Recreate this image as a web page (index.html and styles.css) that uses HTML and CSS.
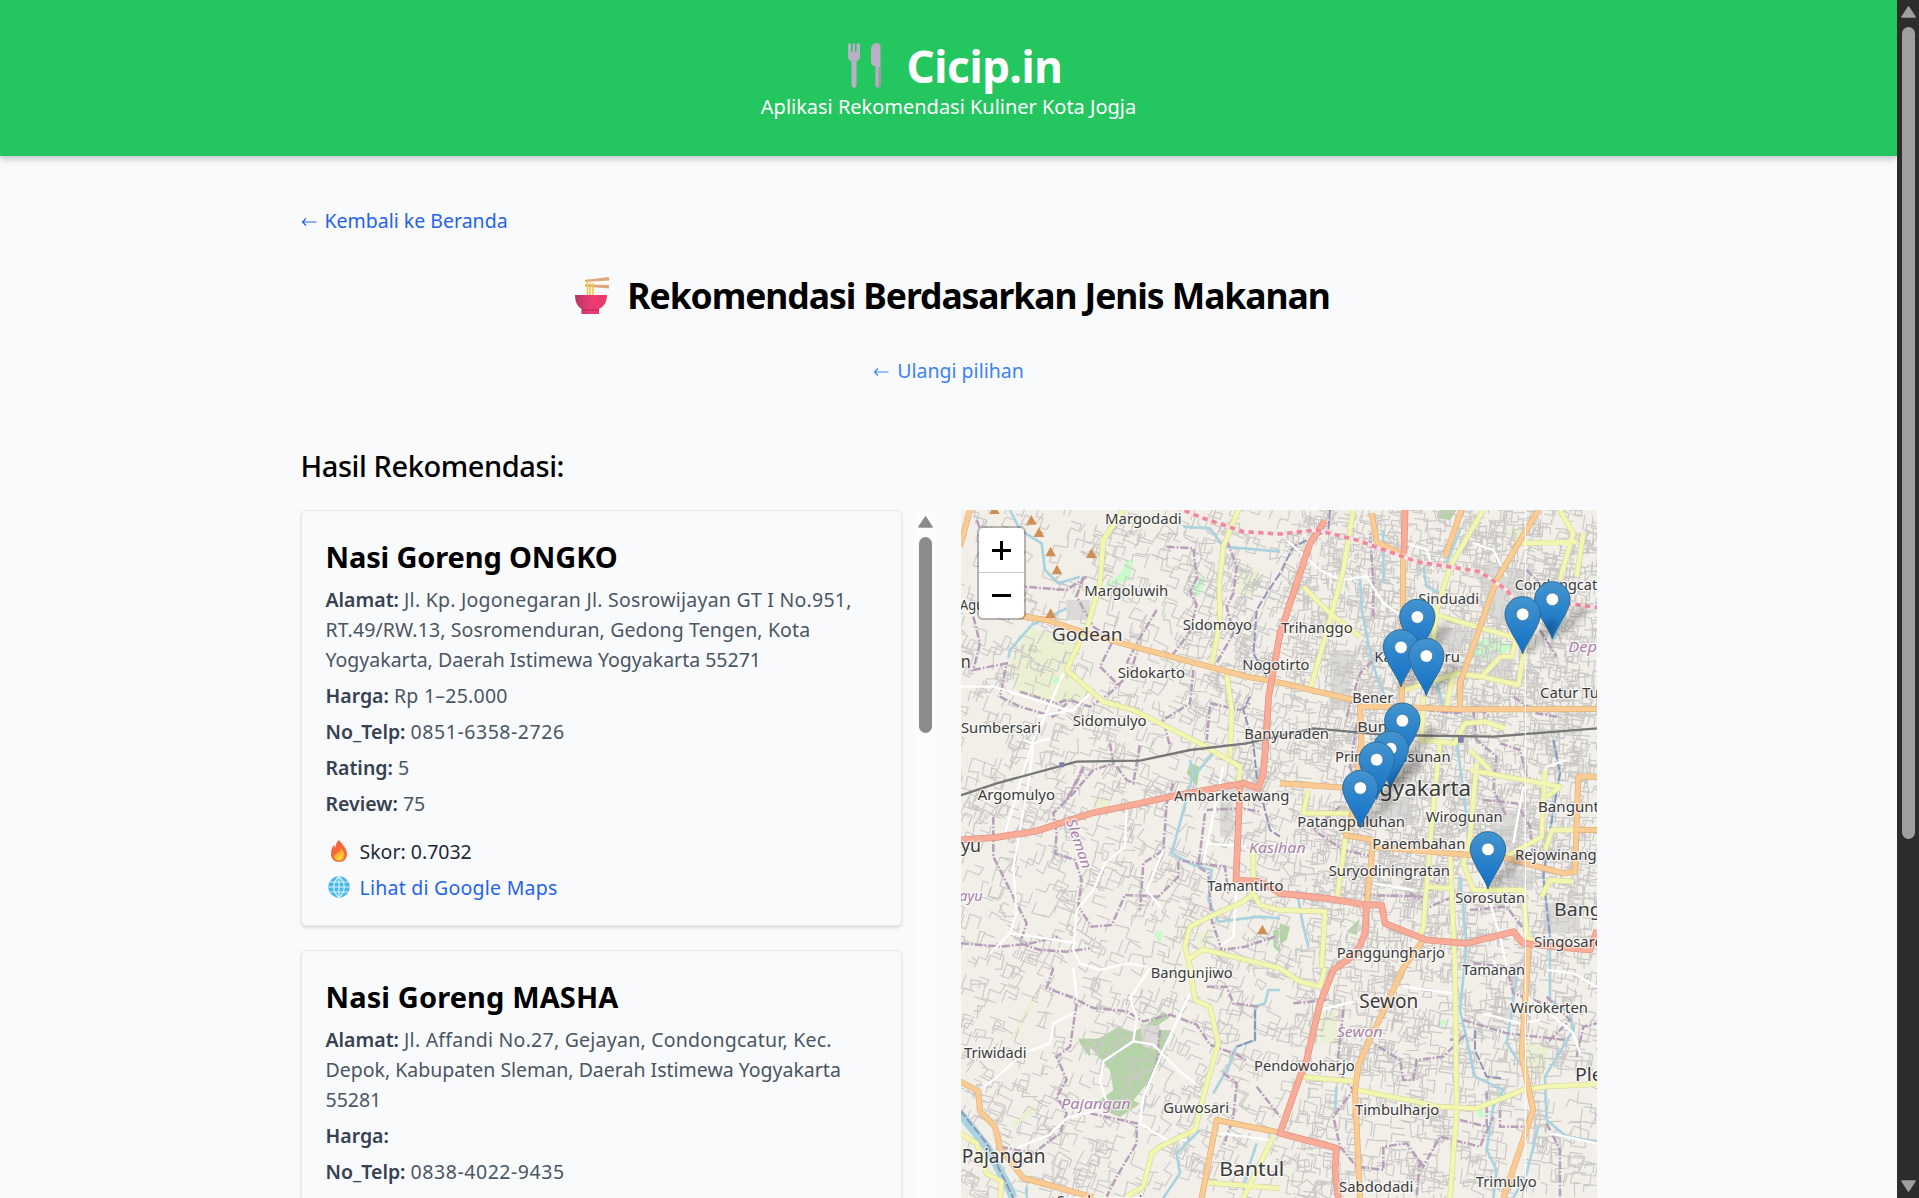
FILE: index.html
```html
<!DOCTYPE html>
<html lang="id">
<head>
<meta charset="utf-8">
<title>Cicip.in</title>
<link rel="stylesheet" href="styles.css">
</head>
<body>
<div class="page">
  <header class="header">
    <h1 class="brand">
      <svg class="brand-icon" viewBox="0 0 36 46"><path fill="#b9afc6" d="M1 1q2-1.500 3 0v8h1.500V1q1.500-1.500 2.500 0v8h1.500V1q2-1.500 3.500 0v12q0 4-3.500 5.500V43q-2.500 4-5 0V18.500Q1 17 1 13z"/><path fill="#b9afc6" d="M24 7q0-7 6-7 3.500 0 3.500 4v39q-2.500 3.500-5 0V23.500q-4.500-1-4.500-5z"/><path fill="#a797ae" d="M31.500 24h2v19q-1 2-2.500 2z"/></svg>
      <span>Cicip.in</span>
    </h1>
    <p class="tagline">Aplikasi Rekomendasi Kuliner Kota Jogja</p>
  </header>
  <main class="content">
    <a class="back"><svg class="arrow" viewBox="0 0 16 12"><path d="M15.500 6H1.500M5 2.500 1.500 6 5 9.500"/></svg><span>Kembali ke Beranda</span></a>
    <h2 class="heading">
      <svg class="bowl" viewBox="0 0 34 37"><path d="m10 3 24-3v3.500L10 5zM10 7.500l24 .5v3.500L10 9.500z" fill="#dda67c"/><path d="M12.500 2v17M15 6v13M18 6v12" stroke="#f3c33c" stroke-width="1.500"/><path d="M0 18h32q0 10-8 14v5H6.500v-5Q0 28 0 18z" fill="url(#bowl)"/><path d="M7 33h17" stroke="#b92a50"/><defs><linearGradient id="bowl"><stop stop-color="#b4365f"/><stop offset=".5" stop-color="#ec3c77"/><stop offset="1" stop-color="#e83864"/></linearGradient></defs></svg>
      <span>Rekomendasi Berdasarkan Jenis Makanan</span>
    </h2>
    <a class="retry"><svg class="arrow" viewBox="0 0 16 12"><path d="M15.500 6H1.500M5 2.500 1.500 6 5 9.500"/></svg><span>Ulangi pilihan</span></a>
    <h3 class="subheading">Hasil Rekomendasi:</h3>
    <div class="results">
      <div class="list">
        <article class="card">
          <h4 class="tight">Nasi Goreng ONGKO</h4>
          <p><b>Alamat:</b> <span class="loose">Jl. Kp. Jogonegaran Jl. Sosrowijayan GT I No.951,</span><br><span class="open">RT.49/RW.13, Sosromenduran, Gedong Tengen, Kota</span><br>Yogyakarta, Daerah Istimewa Yogyakarta 55271</p>
          <p><b>Harga:</b> <span class="loose">Rp 1–25.000</span></p>
          <p><b>No_Telp:</b> <span class="phone">0851-6358-2726</span></p>
          <p><b>Rating:</b> 5</p>
          <p><b>Review:</b> 75</p>
          <p class="score"><svg viewBox="0 0 24 24"><path fill="#f4683b" d="M12 1c2 3 8 8 8 14 0 5-3.500 8-8 8s-8-3-8-8c0-4 1-7 3-9l1 3c1-3 1-5 4-8z"/><path fill="#ffb52f" d="M14 9c3 4 4 6 3 9-1 5-9 5-10 0 0-2 2-3 4-4s3-3 3-5z"/><path fill="#ffdc45" d="M14 15c3 5-1 7-3 6-3-2 2-3 3-6z"/></svg><span>Skor: 0.7032</span></p>
          <a class="maps"><svg viewBox="0 0 24 24"><circle cx="12" cy="12" r="10.700" fill="#4bb9e8"/><path fill="none" stroke="#d9f4ff" stroke-width="1.100" d="M12 1.500v21M1.500 12h21M3 7h18M3 17h18M12 1.500c-7 6-7 15 0 21M12 1.500c7 6 7 15 0 21"/></svg><span class="loose">Lihat di Google Maps</span></a>
        </article>
        <article class="card">
          <h4 class="open">Nasi Goreng MASHA</h4>
          <p><b>Alamat:</b> <span class="loose">Jl. Affandi No.27, Gejayan, Condongcatur, Kec.</span><br>Depok, Kabupaten Sleman, Daerah Istimewa Yogyakarta<br>55281</p>
          <p><b>Harga:</b></p>
          <p><b>No_Telp:</b> <span class="phone">0838-4022-9435</span></p>
        </article>
      </div>
      <div class="scroll">
        <svg class="scroll-arrow" viewBox="0 0 15 12"><path d="M7.500 1 14 11H1z"/></svg>
        <div class="scroll-thumb"></div>
      </div>
      <div class="map">
        <svg class="map-canvas" viewBox="3 0 1908 2064">
          <defs>
            <filter id="soft" x="-1" y="-1" width="3" height="3"><feGaussianBlur stdDeviation="9"/></filter>
            <linearGradient id="pinfill" x2="0" y2="1"><stop stop-color="#4495cf"/><stop offset="1" stop-color="#126fc6"/></linearGradient>
            <g id="pin">
              <path d="M0 0 15-35 75-100Q115-115 95-70L35-12z" fill="#000" opacity=".2" filter="url(#soft)"/>
              <path d="M0-2C-8-32-53-85-53-121A53 53 0 1 1 53-121C53-85 8-32 0-2z" fill="url(#pinfill)" stroke="#2e6c97" stroke-width="3"/>
              <circle cy="-121" r="19" fill="#fff" stroke="#2e6c97" stroke-width="2"/>
            </g>
          </defs>
          <rect width="1911" height="2064" fill="#f2efe9"/>
          <g fill="#ebf0d2">
            <path d="M210 350 350 400 320 480 400 540 350 580 180 560 140 480z"/><path d="m840 170 60 10-20 80-50-10zM1640 60l50-10 10 50-50 10zM400 860h50v40h-50zM710 1270l40-10v40l-40 10zM1080 1510h50v90h-50zM1660 1590l110 20-20 100-50-20z"/><path d="m240 1440-70 140-20 10 50-100zM240 1790l-70 60-20-5 60-50z"/>
          </g>
          <g fill="#b4d3a6">
            <path d="m355 1586 60 0 60-35 45 15 20-10 70-50 20 15-60 40 70 0-20 40-20 60-30 50-50 60 20 10-60 40-50-20-10-30 40-30-10-60-60-70 0 30-30-40z"/><path d="M690 760l30 10-10 60-30-40zM960 1260h-20v50l20 20zM960 1240l30 10-10 40-30 20zM1160 1265l40-40-10 50zM1440 0h50l-20 30-40-5z"/>
          </g>
          <g fill="#c8facc">
            <path d="m430 230 50-40 20-40h20l-10 60-60 20zM690 250l30-50h15l-15 60zM1520 400l80-20 60 30-60 40-60-10zM580 1270l30-10-10 40z"/><circle cx="290" cy="512" r="11"/><circle cx="785" cy="917" r="9"/><circle cx="1448" cy="1538" r="9"/><circle cx="1563" cy="1812" r="11"/>
          </g>
          <g fill="#dcdad7">
            <path d="M320 270h70v60h-70zM780 830h40v150h-40zM1110 420h60v180h-60zM1390 340l150 30-50 60-80-20zM1540 160l180 20-60 150-60 20zM1270 860h90v80h-90zM1590 420l80 30-20 60-70-10zM1590 900h100v130h-100zM1640 1080h80v60h-80zM1750 1180h110v90h-110zM540 1540l60 10-10 70-40-10z"/>
          </g>
          <g id="streets" class="streets"></g>
          <g class="river">
            <path d="m150 0 30 60 65 40 10 80 40 40 65-20M320 295l-105 50-65 75-5 25M670 50l80 5 40 55 170 15M690 750l10 40-35 130-30 110 65 35 55 15-10 90 30 65 125-15 60 5M760 730l-60 70M960 1440h-35l-10 40-30 10v100l-55 20-30 70-40 70M720 1860l-70 70 10 60-50 74M890 1900l-20 60-20 80M200 2030v34M1200 200l5 100 35 170 35 90M1270 60v160M1425 500l25 90M1490 690l40 310M1780 690l20 100-20 110-30 200 20 180v190l60 40 10 50-85 140 5 130 60 50 91 15M1735 1850l-35 140-40 74M1500 1100l20 200-20 200 45 200 85 40-30 50-20 130 30 60-10 84M1670 1400l-30 200 40 60M1130 1730l-5 70M1010 1140l20 110 15 60M1500 60l-40 100M1390 170l10 60 60 30M1820 300l-40 90"/>
            <path class="wide" d="m0 1810 80 100 70 130 10 24"/>
          </g>
          <path class="river-edge" d="m960 190-40 60-30 50-10 130 40 70M870 560l-20 40 30 100 10 100 40 160 30 20M1110 0l-5 60-105 50-40 80M1780 690l20 100-20 110-30 200 20 180M1545 1560l0 60 35 80 45 5M885 1500v90l-55 20M0 1800l80 100 80 164"/>
          <g class="border-line">
            <path d="M50 30l20 50 60 10 40 60 20 80 130 10 60-40M40 320l20 80-20 80 100-20-20 100 60 30 100 30 50-50 60 20 60-40 60-60 20-60M180 545l110 35 30-10M370 770l-50 100 50-90M450 700l10 60-60 20-60 70-60 60 10 60-5 60 60 20 20 60-10 80 40 60 60-5 40-90 100 5 60-60 0-50 60 10 80 10 10 80M100 920l0 120 30 60 30 60 40 80-20 60 60 20 80 5 70-10M3 1300l120 10 90-10 80-20M470 770l30 40 20 10 20-120M370 200l-20 60 50 90 60 40-40 80 60 60M640 820l-20 60-10 140-60 40-10 140M740 900l100-5 60 10M735 910l-20 160 30 20 10 140 30 90 70-10 90-30M620 110l80 5 10 90-20 40 20 40-20 80-60 80M590 300l-60 100-30 60M800 90l30 80-10 80-20 40 20 80-50 90M700 480l-10 100-80 50 20 80M750 580l90 20 30-20M750 590l-10 100"/>
            <path d="m280 1374-20 60 80 30 60 30 100 10 50 30 80-20 80 30 40 60 80 30 30 20M350 1480l-20 130-40 30 30 70-30 50 30 50-20 60-80 60-100-20M390 1810l140 30 0 60-60 100-30 60M600 1560l-10 100-40 100M740 1430h60l20 50 80 10M790 1690l40 30-10 100-30 90M890 1730l70 90M1000 1480l100-10M1240 320l0-100-10-150M1160 620l40-130 60-60M1190 640l-20 130 30 80 70 20M1140 890l-80 70 90 60 90 20M1210 1155l180 5 50-50M1350 1150l60 40 70-30M1400 600l90 10 60-20 40 30M1660 560l70 50 60 10M1540 600l10 90 60 50-10 100 40 80M1620 700l60 20 20 80 60 30M1570 870l100 10 40 70 10 100M1530 1200l110-10 60 80M1540 1360l100 10 20 80 90 30M1510 1530l130 40 180 20M1470 1590l40-10-60 60-80 10-10 60-30 0-10-60-80-50M1150 1500l-20 180 50 60-60 80 20 90 50 60 80 10 0-70 70-10 50 70 50-90 120 30 40-90M1500 1830l80 20 0-110M1620 1800l0 50 90 0M1760 1840l40 80 0 140M1850 1640l20-90 40-10M1760 1460l70 70-70 70M1700 180l60 60 0 80M1740 360l50 80M1380 1950l-10 110"/>
          </g>
          <g class="white-road">
            <path d="M190 690l30 10 50-15M310 490l-60 140-30 60-40 130-45 150M3 530h100l60 20 160 50M390 550l-50 50-110 20M220 700l-10 90-50 280 10 140-20 60-60 60M500 890l-5 120-60 50-35 80-50 60-10 120 20 40 60 20 80-20 60 10M150 1270l140 20 60 10M340 1374l10 90M570 1374l-60 90 20 60-10 70 60 10 80 80 50 40M520 1594l-90 60-10 60 20 60-40 30-80 20-50 50-100 40M340 1510l-60 30-10 60-80 30-90 80-30 20M690 1450l-80 170-60 140-10 80 80 50 60 0M790 770l-60 290M740 1000l120 10M610 1020l-50 120 40 50M830 1140l-10 140-40 30M980 90l100 90 60 30 80-10 50 80 60 40 40 60M1340 100l60 20 20 60M1540 100l60 20 40 80M1560 1080l60 200 20 90M1690 830l-30 170M1240 1120l120 20M1330 1430l150 20M1080 1500l100-25M1640 1400l-30-20-10-30M1570 1510l110 30 60-10M1700 1460l80 60 60 50 20 60M1760 1380l80 10 70 40M1770 1870l140 30M780 1870l150 20M1760 770l60-20"/>
          </g>
          <g class="road yellow" id="yellow-roads">
            <path d="m490 0-60 90-10 130-20 70-15 50-65 140 110 95 90 25 200 100 120 70-5 60M835 0l-45 110-12 110 2 120-25 120M800 490l15 110-5 140M880 1000v150l-30 25-100 45-60 30-15 60 15 60 15 100 45 20 25 110-45 160-25 100-105 50-25 20-25 100-50 30M690 1345l40-27 230 57 60 40 60 15 15-56M880 1150l20 35 60 15 135 5-10 169M1180 0l-30 180-40 150-60 210M1030 230l80 80 90 70M1570 0l-100 170-40 130-10 100M1430 315l240 70-15 55-35 0-55 60 110 25 25-145M1320 545l170-55 70 10M1390 560l-5 140M1480 490l-20 100M1800 0l40 70-40 140M1680 100l170-5M1045 840l-15 70 160 0M1160 960l-30 210M1440 690l-30 310-10 130 75 5M1530 780l270 50-40 30M1470 1020l5 120 10 234 5 430-20 260M1550 760l-20 220-20 80 30 80 150 0 10 140 30 20M1755 780l-10 200-105 60M1400 1130l-10 120-15 40M1911 960l-135 0-20 60M1745 1160l25-50 70 5M1020 1700l165 15M1190 1740l180 35 60 15 120 5 140-55 70-10 150-8M0 1870l50 30 30 90 45 25-5 49M740 2018l220 17M940 1880l-90 184M1590 780l-60-60M1395 690l90 10 30-60 60-5 60 20M1870 70l-20 130"/>
          </g>
          <g class="road orange" id="orange-roads">
            <path d="M30 0 0 110M180 318l80 12 120 40 160 45 320 85 100 18 220 52M1205 720l-5-130h80l220 8 411-1M1235 10l15 85 80 40-5 455M1505 0l-50 140M1735 0l-125 210-110 310v80M960 820l220 15M1205 690l-35 270M1150 975l90 15-20 195M1240 1010l400 35 170 45 35-5 10-285h56M1850 960h61M1390 1290l-60 84-70 150-65 141-10 80 15 319M1705 1310l-5 90-15 240 35 160-90 264M0 1714l55 30 5 60 45 46 15 64 70 90 210 58M725 2064l45-234 190 38"/>
          </g>
          <g class="road red" id="red-roads">
            <path d="m0 990 110-8 120-19 170-55 120-24 120-26 210-38 45 15 15-45 8-100 8-130 34-190 60-180 30-90 45-68M1335 0l-3 130M840 830l-12 280 72 5 60 35 140 15 120 20h45l10 55 125 50 120 10 140-35 30 35 90 10 110 10 21-60M1220 1185l-5 85-25 60-70 50-40 100-40 170-20 50-60 170 170 45-5 65 10 84"/>
          </g>
          <g class="toll">
            <path class="toll-bed" d="m620-20 110 45 120 40 110 7 110-12 120 30 180 65 190 30 80 55 40 50 60-20 171 22"/>
            <path class="toll-dash" d="m620-20 110 45 120 40 110 7 110-12 120 30 180 65 190 30 80 55 40 50 60-20 171 22"/>
          </g>
          <path class="rail" d="m0 857 110-37 240-65 190-3 150-32 170-20 200-45 220 20 320 5 311-25"/>
          <path d="M1696 0v2064" stroke="#fff" stroke-width="3"/>
          <g fill="#7b7fb0"><path d="M298 757h15v15h-15zM1494 681h17v17h-17z"/></g>
          <g fill="#d08f55"><path d="m214 15 16 29h-32zM237 52l16 29h-32zM272 110l16 29h-32zM291 164l16 29h-32zM394 115l16 29h-32zM272 295l16 29h-32zM103-15l16 27H87zM907 1244l16 29h-32z"/></g>
          <g class="labels" id="labels"></g>
          <g id="pins"></g>
        </svg>
        <div class="zoom"><span><i class="plus"></i></span><span><i class="minus"></i></span></div>
      </div>
    </div>
  </main>
</div>
<div class="page-scroll">
  <svg class="scroll-arrow" viewBox="0 0 15 12"><path d="M7.500 1 14 11H1z"/></svg>
  <div class="scroll-thumb"></div>
  <svg class="scroll-arrow down" viewBox="0 0 15 12"><path d="M7.500 11 14 1H1z"/></svg>
</div>
<script src="map.js"></script>
</body>
</html>
```
FILE: styles.css
```css
* { box-sizing: border-box; }
body { margin: 0; height: 1198px; overflow: hidden; display: flex; background: #f9fafb; color: #000; font: 20px/30px "Noto Sans", "Open Sans", sans-serif; }
h1, h2, h3, h4, p { margin: 0; }
.page { width: 1897px; height: 1198px; overflow: hidden; background: #f9fafc; }
.header { height: 155.600px; padding-top: 40px; background: #24c65f; color: #fff; text-align: center; box-shadow: 0 4px 8px rgba(0,0,0,.13), 0 2px 4px rgba(0,0,0,.1); }
.brand { display: flex; justify-content: center; gap: 24px; height: 52px; padding-left: 12px; font-size: 44px; line-height: 52px; letter-spacing: -.4px; }
.brand-icon { width: 36px; height: 46px; margin-top: 3px; }
.tagline { font-size: 20px; line-height: 30px; letter-spacing: -.02px; }
.content { width: 1296px; margin: 0 auto; padding-top: 50px; display: flex; flex-direction: column; }
.back, .retry { display: flex; gap: 8px; align-items: center; font-size: 19.500px; line-height: 30px; }
.back { color: #2563eb; align-self: flex-start; }
.retry { color: #3b82f6; align-self: center; margin-top: 38px; }
.arrow { width: 16px; height: 12px; fill: none; stroke: currentColor; stroke-width: 1.200; margin-top: 3px; }
.heading { display: flex; justify-content: center; gap: 18px; margin: 37px 0 0 8px; height: 45px; font-size: 35.500px; line-height: 45px; letter-spacing: -1.080px; white-space: nowrap; }
.bowl { width: 34px; height: 37px; margin-top: 4px; }
.subheading { margin-top: 60px; height: 64px; font-size: 29px; line-height: 40px; font-weight: 500; letter-spacing: -.42px; }
.results { display: flex; height: 688px; }
.list { width: 601px; display: flex; flex-direction: column; gap: 24px; color: #374151; }
.card { flex: none; height: 416px; padding: 26px 24px; border: 1px solid #e5e7eb; border-radius: 5px; box-shadow: 0 2px 3px rgba(0,0,0,.12); white-space: nowrap; }
.card h4 { font-size: 29px; line-height: 40px; color: #000; margin-bottom: 8px; }
.card p { font-size: 19.500px; margin-bottom: 6px; margin-top: -2px; padding-top: 2px; color: #4b5563; }
.card b { font-weight: 600; color: #374151; }
.tight { letter-spacing: -.14px; }
.open { letter-spacing: .12px; }
.loose { letter-spacing: .24px; }
.phone { letter-spacing: .55px; }
.card .score { display: flex; margin-top: 16px; color: #1f2937; }
.score svg, .maps svg { width: 24px; height: 24px; margin: 2px 9px 0 1px; }
.maps { display: flex; color: #2563eb; font-size: 19.500px; }
.scroll { width: 23px; margin-left: 12px; background: #fcfcfc; display: flex; flex-direction: column; align-items: center; padding-top: 6px; }
.scroll-arrow { width: 15px; height: 12px; fill: #8b8b8b; stroke: #8b8b8b; stroke-width: 1.500; stroke-linejoin: round; }
.scroll-thumb { width: 13px; height: 196px; margin-top: 9px; border-radius: 7px; background: #8b8b8b; }
.map { position: relative; width: 636px; height: 688px; margin-left: 24px; overflow: hidden; }
.map-canvas { display: block; width: 636px; height: 688px; }
.streets { fill: none; stroke: #cbc9c7; stroke-width: 3.400; stroke-linejoin: round; }
.river { fill: none; stroke: #aad3df; stroke-width: 8; stroke-linejoin: round; }
.wide { stroke-width: 26; }
.river-edge { fill: none; stroke: #9096b8; stroke-width: 6; stroke-dasharray: 26 7; }
.border-line { fill: none; stroke: #b79fba; stroke-width: 7.500; stroke-dasharray: 24 6 5 6; }
.white-road { fill: none; stroke: #fff; stroke-width: 7; stroke-linejoin: round; }
.road { fill: none; stroke-linejoin: round; }
.yellow { stroke: #f3f6b0; stroke-width: 13; }
.orange { stroke: #fbcb94; stroke-width: 14; }
.red { stroke: #f9ac98; stroke-width: 16; }
.casing.yellow { stroke: #d7d9a0; stroke-width: 17; }
.casing.orange { stroke: #dfb078; stroke-width: 18; }
.casing.red { stroke: #e28f7e; stroke-width: 20; }
.toll { fill: none; stroke-width: 11; }
.toll-bed { stroke: #fbe6e8; }
.toll-dash { stroke: #f0899c; stroke-dasharray: 16 13; }
.rail { fill: none; stroke: #777; stroke-width: 7; }
.labels text { font-family: "Noto Sans", sans-serif; fill: #3c3c3c; stroke: rgba(255,255,255,.65); stroke-width: 8; stroke-linejoin: round; paint-order: stroke; }
.labels .district { fill: #a982ab; font-style: italic; }
.zoom { position: absolute; left: 16px; top: 16px; width: 49px; border: 2px solid rgba(0,0,0,.25); border-radius: 6px; background: #fff; background-clip: padding-box; }
.zoom span { display: flex; align-items: center; justify-content: center; height: 45px; }
.zoom span:first-child { border-bottom: 1px solid #ccc; }
.plus, .minus { width: 19px; height: 19px; margin-top: 1px; background: linear-gradient(#000, #000) center / 19px 3px no-repeat; }
.plus { background: linear-gradient(#000, #000) center / 19px 3px no-repeat, linear-gradient(#000, #000) center / 3px 19px no-repeat; }
.page-scroll { width: 22px; height: 1198px; background: #2c2c2c; display: flex; flex-direction: column; align-items: center; padding: 6px 0; }
.page-scroll .scroll-arrow { fill: #9f9f9f; stroke: #9f9f9f; }
.page-scroll .scroll-thumb { background: #9f9f9f; height: 812px; }
.page-scroll .down { margin-top: auto; }
```
FILE: map.js
```js
const NS = "http://www.w3.org/2000/svg";

// Minor residential streets: short branching walks, denser toward the city.
let seed = 77;
const rnd = () => (seed = (seed * 16807) % 2147483647) / 2147483647;
const density = (x, y) => {
  if (x > 1050 && y < 1300) return x > 1200 ? 1 : 0.75;
  if (x > 1000) return y < 1700 ? 0.5 : 0.4;
  if (x > 650 && y < 900) return 0.5;
  return 0.28;
};
let d = "";
for (let i = 0; i < 7600; i++) {
  let x = rnd() * 1911, y = rnd() * 2064;
  const keep = density(x, y);
  if (rnd() > keep) continue;
  d += `M${x | 0} ${y | 0}`;
  let a = (x < 1000 ? 0.35 : 0.12) + Math.floor(rnd() * 4) * Math.PI / 2;
  const steps = 2 + Math.floor(rnd() * 3);
  for (let s = 0; s < steps; s++) {
    const len = (keep > 0.6 ? 12 : 18) + rnd() * 30;
    x += Math.cos(a) * len; y += Math.sin(a) * len;
    d += `L${x | 0} ${y | 0}`;
    a += (rnd() < 0.5 ? 1 : -1) * Math.PI / 2 + (rnd() - 0.5) * 0.5;
  }
}
const streets = document.createElementNS(NS, "path");
streets.setAttribute("d", d);
document.getElementById("streets").append(streets);

// Each road class gets a darker casing beneath it.
["yellow", "orange", "red"].forEach(kind => {
  const group = document.getElementById(kind + "-roads");
  const casing = group.cloneNode(true);
  casing.removeAttribute("id");
  casing.classList.add("casing");
  group.before(casing);
});

// [text, x, baseline, width, size, district]
const labels = [
  ["Margodadi",435,42,230],["Margoluwih",373,258,252],["Sidomoyo",668,360,208],["Godean",275,393,213,56],
  ["Sidokarto",473,503,202],["Sidomulyo",338,648,222],["Sumbersari",3,670,240],["Agung",0,300,120],["n",2,475,30,54],
  ["Nogotirto",847,480,201],["Trihanggo",963,370,215],["Sinduadi",1375,282,182],["Condongcatur",1664,240,292],
  ["Karangwaru",1243,457,257],["Bener",1177,578,123],["Banyuraden",853,688,254],["Bumijo",1192,667,160],
  ["Catur Tunggal",1740,563,296],["Depok",1825,425,138,44,1],["Argomulyo",53,870,232],["Ambarketawang",642,873,346],
  ["Pringgokusunan",1125,757,347],["Yogyakarta",1182,858,351,64],["Wirogunan",1397,937,231],["Patangpuluhan",1012,950,323],
  ["Panembahan",1237,1018,279],["Banguntapan",1734,905,290],["Rejowinangun",1665,1050,300],["Suryodiningratan",1106,1098,364],
  ["Kasihan",867,1030,170,44,1],["Tamantirto",742,1143,228],["Sorosutan",1486,1180,209],["Banguntapan",1782,1218,375,56],
  ["Singosaren",1722,1310,234],["Panggungharjo",1130,1343,325],["yu",3,1025,60,56],["ayu",-2,1172,70,44,1],
  ["Bangunjiwo",572,1404,246],["Tamanan",1507,1394,188],["Triwidadi",12,1644,188],["Pajangan",303,1796,209,44,1],
  ["Guwosari",610,1808,197],["Pendowoharjo",882,1682,302],["Pajangan",5,1958,252,58],["Bantul",778,1998,195,62],
  ["Sewon",1198,1494,177,58],["Sewon",1130,1580,138,44,1],["Wirokerten",1651,1510,233],["Pleret",1845,1714,160,56],
  ["Timbulharjo",1185,1815,253],["Trimulyo",1547,2030,183],["Sabdodadi",1137,2045,223],["Sendangsari",290,2088,258]
];
const addLabel = ([text, x, y, width, size = 43, district]) => {
  const t = document.createElementNS(NS, "text");
  t.textContent = text;
  t.setAttribute("x", x);
  t.setAttribute("y", y);
  t.setAttribute("font-size", size);
  t.setAttribute("textLength", width);
  t.setAttribute("lengthAdjust", "spacingAndGlyphs");
  if (district) t.classList.add("district");
  document.getElementById("labels").append(t);
  return t;
};
labels.forEach(addLabel);
addLabel(["Sleman", 0, 0, 155, 42, 1]).setAttribute("transform", "translate(318 932) rotate(71)");

// Pin tips, north to south.
[[1777,389],[1688,434],[1372,442],[1323,533],[1399,559],[1327,753],[1292,837],[1250,870],[1201,955],[1584,1139]].forEach(([x, y]) => {
  const u = document.createElementNS(NS, "use");
  u.setAttribute("href", "#pin");
  u.setAttribute("x", x);
  u.setAttribute("y", y);
  document.getElementById("pins").append(u);
});
```
